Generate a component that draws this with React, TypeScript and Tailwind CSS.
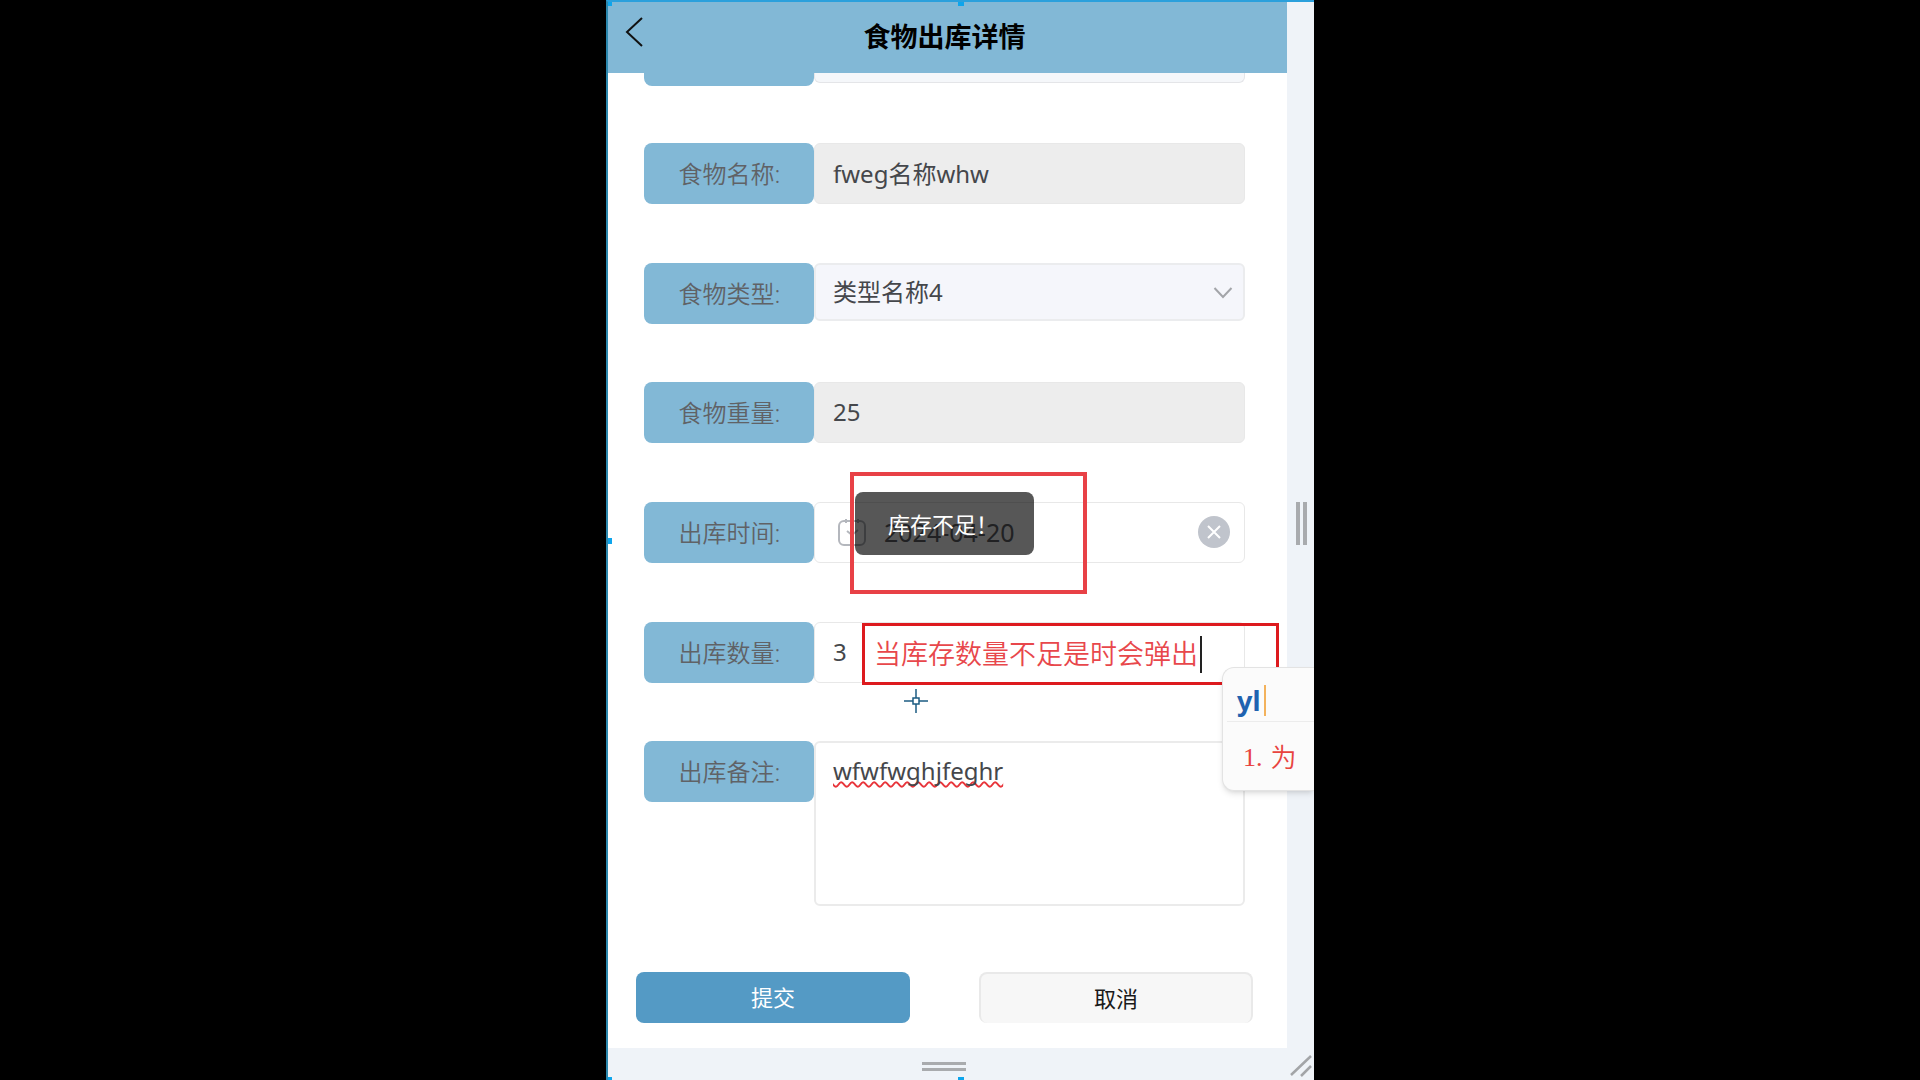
// React imports
import type { JSX, ReactNode } from 'react'


interface IFieldRowProps {
  id: string;
  label: string;
  className?: string;
  children: ReactNode;
}

const FieldRow = ({ id, label, className = 'h-[61px]', children }: IFieldRowProps): JSX.Element => (
  <div className={`relative flex items-start ${className}`}>
    <label
      htmlFor={id}
      className="flex h-[61px] w-[170px] shrink-0 items-center justify-center rounded-lg bg-[#82b8d6] pl-px text-2xl font-[350] text-[#606266]"
    >
      {label}
    </label>
    {children}
  </div>
)

const inputClass = 'h-[61px] w-full min-w-0 rounded-md border border-[#e8e8e8] px-[18px] pb-0.5 text-2xl text-[#45474b] outline-none'

const Toast = ({ text }: { text: string }): JSX.Element => (
  <div role="status" className="absolute -top-[10px] left-[211px] flex h-[63px] w-[179px] items-center rounded-lg bg-black/66 pt-0.5 pl-[33px] text-[22px] whitespace-nowrap text-white">
    {text}
  </div>
)

const CalendarIcon = (): JSX.Element => (
  <svg className="absolute top-4 left-[193px] size-[30px]" viewBox="0 0 30 30" fill="none" stroke="#b4b7bd" strokeWidth="2">
    <rect x="2" y="3" width="26" height="24" rx="5" />
    <path d="M9 1v4M21 1v4" />
    <path d="M10 13l5 4 6-5" />
  </svg>
)

const InputPopup = (): JSX.Element => (
  <div className="absolute top-[45px] -right-[69px] h-[124px] w-[92px] rounded-l-xl border border-r-0 border-[#e3e3e3] bg-[#fbfbfb] pl-1 shadow-md">
    <div className="flex h-[54px] items-center gap-1 border-b border-[#ececec] pt-3 pl-[10px]">
      <span className="text-[27px] leading-8 font-bold text-[#1f63b0]">yl</span>
      <span className="h-[31px] w-0.5 bg-[#f3b25c]" />
    </div>
    <div className="flex h-[68px] items-center gap-2 pt-0.5 pl-4 text-[26px] text-[#e8443f]">
      <span className="font-['Liberation_Serif',serif]">1.</span>
      <span className="font-[350]">为</span>
    </div>
  </div>
)

const Crosshair = (): JSX.Element => (
  <svg className="absolute top-[67px] left-[260px] size-6" viewBox="0 0 24 24" fill="none" stroke="#1c5c82" strokeWidth="1.5">
    <path d="M12 0v9M12 15v9M0 12h9M15 12h9" />
    <rect x="9" y="9" width="6" height="6" fill="#fff" />
  </svg>
)

const Header = (): JSX.Element => (
  <header className="relative flex h-[71px] items-center justify-center bg-[#82b8d6] pr-[6px]">
    <button type="button" aria-label="返回" className="absolute top-[14px] left-[15px]">
      <svg className="h-8 w-6" viewBox="0 0 24 32" fill="none" stroke="#111" strokeWidth="2">
        <path d="M19 2L4 16l15 14" />
      </svg>
    </button>
    <h1 className="text-[27px] font-bold text-black">食物出库详情</h1>
  </header>
)

const DetailForm = (): JSX.Element => (
  <form className="flex-1 bg-white">
    <div className="pr-[42px] pl-9">
      {/* row scrolled under the header */}
      <div className="flex h-[13px] items-start" aria-hidden="true">
        <div className="h-[13px] w-[170px] shrink-0 rounded-b-lg bg-[#82b8d6]" />
        <div className="h-[10px] flex-1 rounded-b-md border border-t-0 border-[#e4e5e8] bg-[#f5f7fa]" />
      </div>

      <div className="flex flex-col gap-[59px] pt-[57px]">
        <FieldRow id="name" label="食物名称:">
          <input id="name" defaultValue="fweg名称whw" readOnly className={`${inputClass} bg-[#ededed]`} />
        </FieldRow>

        <FieldRow id="type" label="食物类型:" className="h-[60px]">
          <select
            id="type"
            className="h-[58px] w-full min-w-0 appearance-none rounded-md border-2 border-[#ebecee] bg-[#f5f6fb] px-[17px] text-2xl text-[#45474b]"
          >
            <option>类型名称4</option>
          </select>
          <svg className="pointer-events-none absolute top-[22px] right-3 h-4 w-5" viewBox="0 0 20 16" fill="none" stroke="#a3a5a9" strokeWidth="2">
            <path d="M1.500 3l8.500 9 8.500-9" />
          </svg>
        </FieldRow>

        <FieldRow id="weight" label="食物重量:">
          <input id="weight" defaultValue="25" readOnly className={`${inputClass} bg-[#ededed]`} />
        </FieldRow>

        <FieldRow id="date" label="出库时间:">
          <input
            id="date"
            defaultValue="2024-04-20"
            className="h-[61px] w-full min-w-0 rounded-md border border-[#e8e8e8] bg-white pb-0.5 pl-[69px] text-[25px] text-[#606266] outline-none"
          />
          <CalendarIcon />
          <button type="button" aria-label="清除" className="absolute top-[14px] right-[15px] size-8 rounded-full bg-[#c0c4cc]">
            <svg className="size-8" viewBox="0 0 32 32" fill="none" stroke="#fff" strokeWidth="2">
              <path d="M10 10l12 12M22 10L10 22" />
            </svg>
          </button>
          <Toast text="库存不足！" />
          <div className="pointer-events-none absolute -top-[30px] left-[206px] h-[122px] w-[237px] border-4 border-[#e84146]" />
        </FieldRow>

        <FieldRow id="count" label="出库数量:" className="z-10 h-[60px]">
          <input id="count" defaultValue="3" className={`${inputClass} bg-white`} />
          <div className="absolute top-px -right-[34px] left-[218px] flex h-[62px] items-center gap-0.5 border-[3px] border-[#dd1a1e] pl-[9px] text-[27px] font-[350] whitespace-nowrap text-[#e8474b]">
            当库存数量不足是时会弹出
            <span className="h-[37px] w-0.5 bg-[#222]" />
          </div>
          <Crosshair />
          <InputPopup />
        </FieldRow>

        <FieldRow id="remark" label="出库备注:" className="h-[165px]">
          <textarea
            id="remark"
            spellCheck={false}
            defaultValue="wfwfwghjfeghr"
            className="h-[165px] w-full min-w-0 resize-none rounded-md border-2 border-[#ebebeb] bg-white px-[17px] py-3 text-2xl text-[#45474b] underline decoration-[#e8343a] decoration-wavy decoration-2 outline-none [text-decoration-skip-ink:none]"
          />
        </FieldRow>
      </div>
    </div>

    <div className="grid grid-cols-2 gap-[69px] pt-[66px] pr-[34px] pb-[25px] pl-7">
      <button type="submit" className="h-[51px] rounded-lg bg-[#549ac5] text-[22px] text-white">
        提交
      </button>
      <button type="button" className="h-[51px] rounded-lg border-2 border-b-0 border-[#e9e9e9] bg-[#f7f7f7] text-[22px] text-[#1a1a1a]">
        取消
      </button>
    </div>
  </form>
)

const Handle = ({ className }: { className: string }): JSX.Element => (
  <span className={`absolute size-[6px] bg-[#0ea5ec] ${className}`} />
)

const App = (): JSX.Element => (
  <main className="flex min-h-screen justify-center bg-black font-['Noto_Sans','Noto_Sans_CJK_SC',sans-serif]">
    <div className="relative flex w-full max-w-[708px] flex-col overflow-hidden border-t-2 border-l-2 border-t-[#2ba0dc] border-l-[#2b87ad] bg-[#eff3f8]">
      <div className="flex flex-1">
        <div className="flex min-w-0 flex-1 flex-col">
          <Header />
          <DetailForm />
        </div>
        <div className="flex w-[27px] shrink-0 items-center justify-center gap-[3px] pb-1 pl-px">
          <span className="h-[43px] w-1 bg-[#a9abae]" />
          <span className="h-[43px] w-1 bg-[#a9abae]" />
        </div>
      </div>

      <footer className="flex h-8 items-center justify-center pr-[35px]">
        <div className="flex w-11 flex-col gap-[3px] pt-1">
          <span className="h-[3px] bg-[#a9abae]" />
          <span className="h-[3px] bg-[#a9abae]" />
        </div>
        <svg className="absolute right-px bottom-[3px] size-6" viewBox="0 0 24 24" fill="none" stroke="#a3a5a8" strokeWidth="2.500">
          <path d="M2 22L22 3M12 23l10-10" />
        </svg>
      </footer>

      <Handle className="-top-0.5 -left-0.5" />
      <Handle className="-top-0.5 left-1/2 -translate-x-1/2" />
      <Handle className="top-1/2 -left-0.5 -translate-y-1/2" />
      <Handle className="-bottom-[3px] -left-0.5" />
      <Handle className="-bottom-[3px] left-1/2 -translate-x-1/2" />
    </div>
  </main>
)

export default App
